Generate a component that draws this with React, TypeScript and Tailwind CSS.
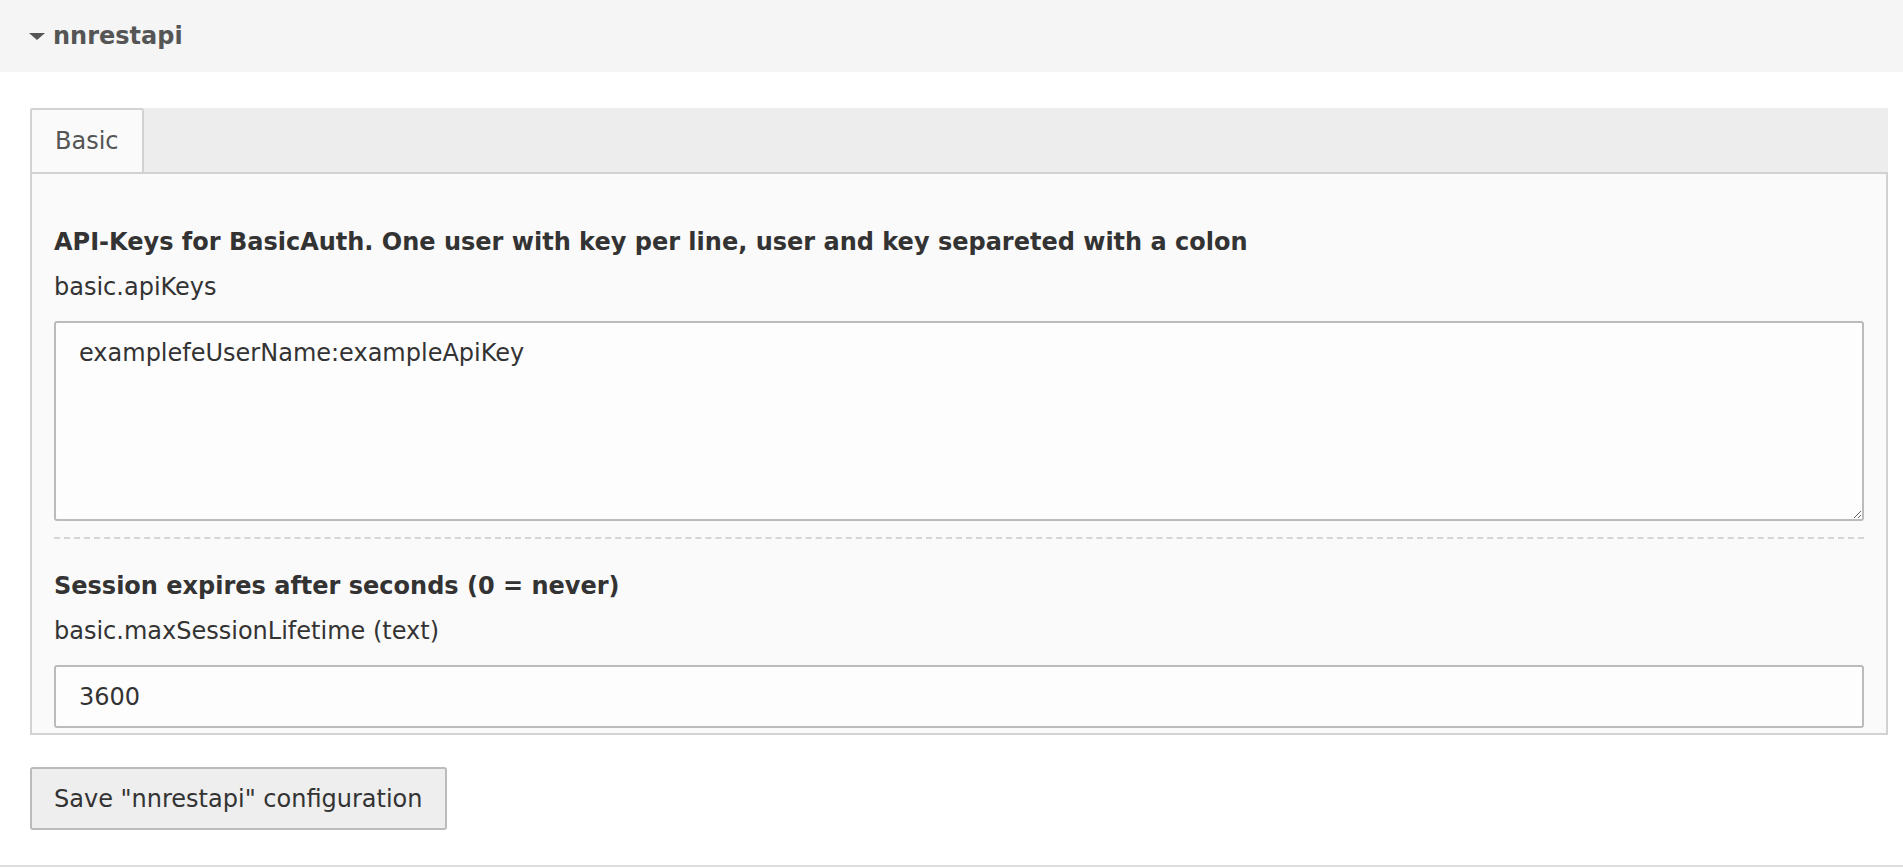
import { useState } from "react";

const App = () => {
  const [apiKeys, setApiKeys] = useState("examplefeUserName:exampleApiKey");
  const [lifetime, setLifetime] = useState("3600");

  return (
    <div className="min-h-screen w-full bg-white text-[24px] text-[#333] font-['DejaVu_Sans',Verdana,sans-serif]">
      {/* extension header */}
      <div className="flex h-[72px] items-center gap-[8px] bg-[#f5f5f5] pl-[29px]">
        <svg width="16" height="8" viewBox="0 0 16 8" className="mt-[2px]">
          <path d="M0 0 H16 L8 7 Z" fill="#555" />
        </svg>
        <span className="font-bold text-[#555]">nnrestapi</span>
      </div>

      <div className="pl-[30px] pr-[15px] pt-[36px]">
        {/* tabs */}
        <div className="flex bg-[#ededed]">
          <div className="flex h-[64px] items-center rounded-t-[3px] border-2 border-b-0 border-[#d2d2d2] bg-[#fafafa] px-[23px] text-[#555]">
            Basic
          </div>
        </div>

        {/* panel */}
        <div className="h-[563px] overflow-hidden border-2 border-[#d2d2d2] bg-[#fafafa] px-[22px] pt-[50px]">
          <div className="font-bold leading-[36px]">
            API-Keys for BasicAuth. One user with key per line, user and key separeted with a colon
          </div>
          <div className="mt-[9px] leading-[36px]">basic.apiKeys</div>
          <textarea
            value={apiKeys}
            onChange={(e) => setApiKeys(e.target.value)}
            className="mt-[16px] block h-[200px] w-full rounded-[3px] border-2 border-[#bbb] bg-[#fdfdfd] px-[23px] pt-[12px] leading-[36px] text-[#333] outline-none"
          />
          <div className="mt-[16px] border-t-2 border-dashed border-[#d5d5d5]"></div>
          <div className="mt-[29px] font-bold leading-[36px]">Session expires after seconds (0 = never)</div>
          <div className="mt-[9px] leading-[36px]">basic.maxSessionLifetime (text)</div>
          <input
            type="text"
            value={lifetime}
            onChange={(e) => setLifetime(e.target.value)}
            className="mt-[16px] block h-[63px] w-full rounded-[3px] border-2 border-[#bbb] bg-[#fdfdfd] px-[23px] text-[#333] outline-none"
          />
        </div>

        <button
          type="button"
          className="mt-[32px] h-[63px] rounded-[3px] border-2 border-[#bbb] bg-[#eee] px-[22px] text-[#333]"
        >
          Save "nnrestapi" configuration
        </button>
      </div>

      <div className="mt-[35px] border-t-2 border-[#ddd]"></div>
    </div>
  );
};

export default App;
